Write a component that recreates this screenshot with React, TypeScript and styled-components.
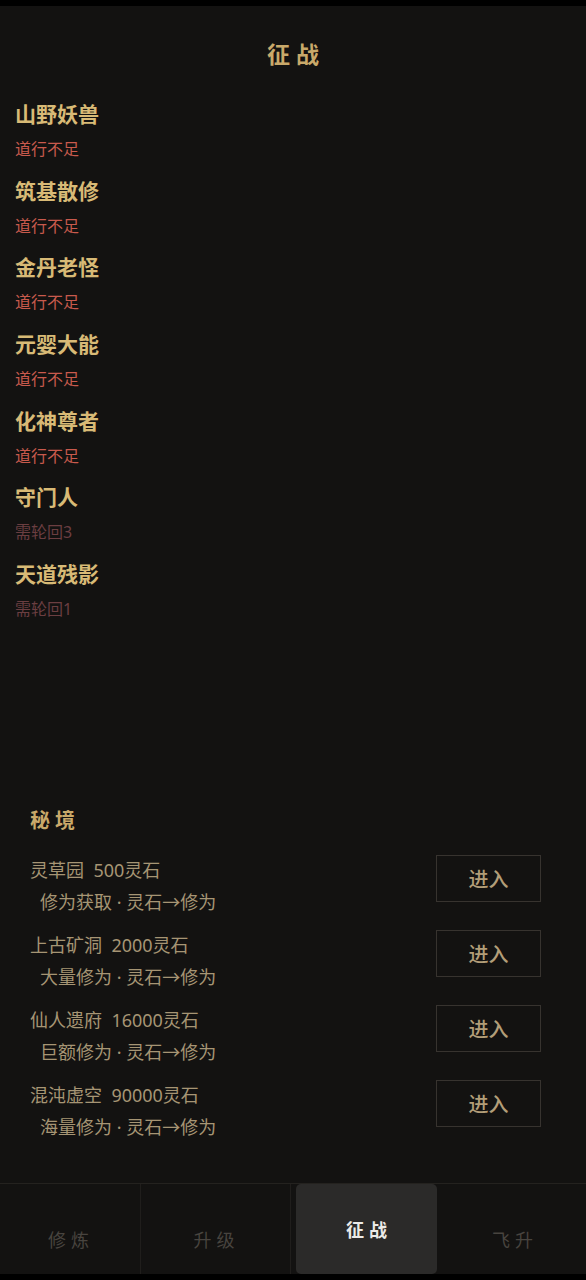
import React from 'react';
import styled, { createGlobalStyle } from 'styled-components';

const GlobalStyle = createGlobalStyle`
  html, body {
    margin: 0;
    padding: 0;
    background: #000;
  }
  body {
    font-family: "Noto Sans", "Noto Sans CJK SC", sans-serif;
  }
`;

const Screen = styled.div`
  width: 586px;
  height: 1280px;
  display: flex;
  flex-direction: column;
  background: #000;
  padding: 6px 0;
  box-sizing: border-box;
`;

const Main = styled.main`
  flex: 1;
  display: flex;
  flex-direction: column;
  background: #131211;
`;

const Title = styled.h1`
  margin: 33px 0 31px;
  text-align: center;
  font-size: 23px;
  line-height: 30px;
  font-weight: 700;
  letter-spacing: 6px;
  padding-left: 6px;
  color: #c9a96a;
`;

const EnemyList = styled.div`
  display: flex;
  flex-direction: column;
  padding: 0 15px;
`;

const Enemy = styled.div`
  display: flex;
  flex-direction: column;
  height: 76.67px;
`;

const EnemyName = styled.div`
  font-size: 21px;
  line-height: 28px;
  font-weight: 600;
  color: #d8ba76;
`;

const EnemyStatus = styled.div<{ $locked?: boolean }>`
  margin-top: 10px;
  font-size: 16px;
  line-height: 22px;
  color: ${p => (p.$locked ? '#6b3e41' : '#c85a4d')};
`;

const Realm = styled.section`
  margin-top: auto;
  padding: 0 45px 28px 30px;
`;

const RealmTitle = styled.h2`
  margin: 0 0 21px;
  font-size: 20px;
  line-height: 26px;
  font-weight: 700;
  letter-spacing: 5px;
  color: #c9a96a;
`;

const RealmRow = styled.div`
  display: flex;
  justify-content: space-between;
  align-items: flex-start;
  height: 75px;
`;

const RealmInfo = styled.div`
  padding-top: 3px;
  display: flex;
  flex-direction: column;
  gap: 7px;
`;

const RealmName = styled.div`
  font-size: 18px;
  line-height: 24px;
  color: #a69574;
  white-space: pre;
`;

const RealmDesc = styled.div`
  padding-left: 10px;
  font-size: 18px;
  line-height: 24px;
  color: #a69574;
`;

const Arrow = styled.span`
  font-family: "Noto Sans CJK SC", sans-serif;
`;

const EnterButton = styled.button`
  width: 105px;
  height: 47px;
  background: transparent;
  border: 1px solid #37332f;
  color: #b29d78;
  font-family: inherit;
  font-size: 20px;
  font-weight: 500;
  letter-spacing: 0;
  cursor: pointer;
`;

const Nav = styled.nav`
  height: 91px;
  border-top: 1px solid #24221f;
  display: grid;
  grid-template-columns: 141px 150px 151px 1fr;
  background: #131211;
  box-sizing: border-box;
`;

const Tab = styled.div<{ $active?: boolean }>`
  display: flex;
  align-items: center;
  justify-content: center;
  font-size: 18px;
  letter-spacing: 5px;
  padding-left: 2px;
  border-right: 1px solid #201e1c;
  color: #48443f;
  padding-top: 20px;

  &:nth-child(3), &:nth-child(4) {
    border-right: none;
  }

  ${p =>
    p.$active &&
    `
    margin: 0 5px;
    padding-top: 0;
    padding-left: 5px;
    background: #2b2a29;
    border-radius: 5px;
    color: #ecebe8;
    font-weight: 600;
  `}
`;

const enemies = [
  { name: '山野妖兽', status: '道行不足' },
  { name: '筑基散修', status: '道行不足' },
  { name: '金丹老怪', status: '道行不足' },
  { name: '元婴大能', status: '道行不足' },
  { name: '化神尊者', status: '道行不足' },
  { name: '守门人', status: '需轮回3', locked: true },
  { name: '天道残影', status: '需轮回1', locked: true },
];

const realms = [
  { name: '灵草园', cost: '500灵石', gain: '修为获取' },
  { name: '上古矿洞', cost: '2000灵石', gain: '大量修为' },
  { name: '仙人遗府', cost: '16000灵石', gain: '巨额修为' },
  { name: '混沌虚空', cost: '90000灵石', gain: '海量修为' },
];

const tabs = ['修炼', '升级', '征战', '飞升'];

export default function App() {
  return (
    <>
      <GlobalStyle />
      <Screen>
        <Main>
          <Title>征战</Title>
          <EnemyList>
            {enemies.map(e => (
              <Enemy key={e.name}>
                <EnemyName>{e.name}</EnemyName>
                <EnemyStatus $locked={e.locked}>{e.status}</EnemyStatus>
              </Enemy>
            ))}
          </EnemyList>
          <Realm>
            <RealmTitle>秘境</RealmTitle>
            {realms.map(r => (
              <RealmRow key={r.name}>
                <RealmInfo>
                  <RealmName>{r.name}  {r.cost}</RealmName>
                  <RealmDesc>
                    {r.gain} · 灵石<Arrow>→</Arrow>修为
                  </RealmDesc>
                </RealmInfo>
                <EnterButton>进入</EnterButton>
              </RealmRow>
            ))}
          </Realm>
        </Main>
        <Nav>
          {tabs.map(t => (
            <Tab key={t} $active={t === '征战'}>
              {t}
            </Tab>
          ))}
        </Nav>
      </Screen>
    </>
  );
}
